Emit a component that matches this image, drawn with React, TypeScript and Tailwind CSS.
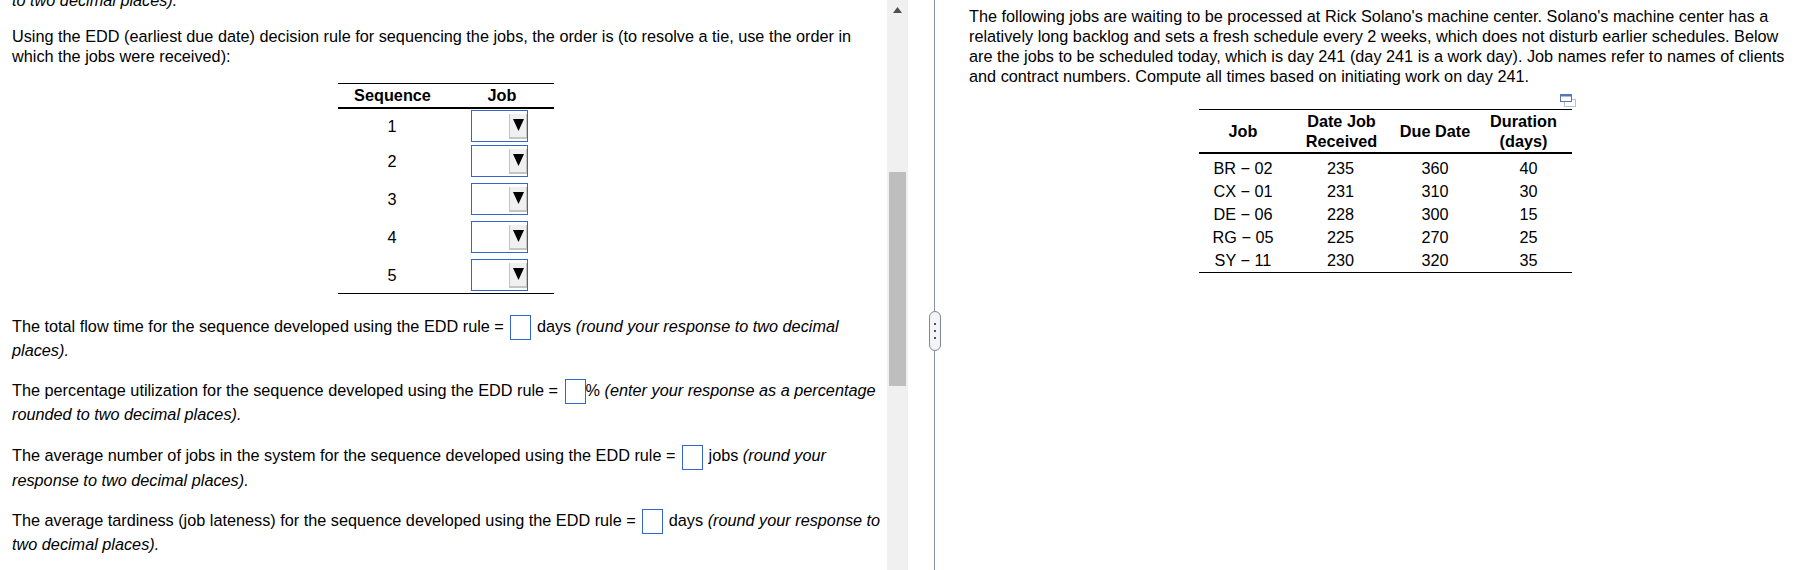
function Blank({ className }: { className: string }) {
  return <span className={`-my-[2px] ml-[2px] inline-block h-[25px] w-[21px] border-[1.3px] border-[#3366cc] bg-white align-middle ${className}`} />
}

function JobSelect() {
  return (
    <div className="relative h-[32px] w-[57px] border-[1.3px] border-[#3366cc] bg-white">
      <div className="absolute top-[3px] right-0 flex h-[25px] w-[18px] items-center justify-center border-r border-b-2 border-l border-[#c4c4c4] bg-[#f0f0f0]">
        <svg width="11" height="12" viewBox="0 0 11 12" className="-mt-[1px]">
          <polygon points="0,0 11,0 5.5,12" fill="#000" />
        </svg>
      </div>
    </div>
  )
}

const sequence = [
  { n: 1, cls: 'mt-[1px]' },
  { n: 2, cls: 'mt-[3px]' },
  { n: 3, cls: 'mt-[6px]' },
  { n: 4, cls: 'mt-[6px]' },
  { n: 5, cls: 'mt-[6px]' },
]

const jobs = [
  ['BR − 02', '235', '360', '40'],
  ['CX − 01', '231', '310', '30'],
  ['DE − 06', '228', '300', '15'],
  ['RG − 05', '225', '270', '25'],
  ['SY − 11', '230', '320', '35'],
]

function SequenceTable() {
  return (
    <div className="ml-[338px] mt-[17px] w-[216px] border-t border-b border-black pb-[2px]">
      <div className="flex h-[25px] items-center border-b-2 border-black pb-[2px] font-bold">
        <div className="w-[109px] text-center">Sequence</div>
        <div className="w-[107px] pl-[3px] text-center">Job</div>
      </div>
      {sequence.map((row) => (
        <div key={row.n} className={`flex h-[32px] items-center ${row.cls}`}>
          <div className="w-[107px] pl-[1px] text-center">{row.n}</div>
          <div className="pl-[26px]"><JobSelect /></div>
        </div>
      ))}
    </div>
  )
}

function JobsTable() {
  return (
    <div className="relative ml-[229px] mt-[23px] w-[373px] border-t border-b border-black">
      <svg width="16" height="13" viewBox="0 0 16 13" className="absolute -top-[16px] right-[-4px]">
        <rect x="4.5" y="5.5" width="11" height="7" fill="#fff" stroke="#b4c0d6" />
        <rect x="0.5" y="0.5" width="11" height="7" fill="#fff" stroke="#5577b8" />
        <rect x="0.5" y="0.5" width="11" height="2" fill="#5577b8" />
      </svg>
      <div className="flex h-[44px] items-center border-b-2 border-black text-center font-bold">
        <div className="w-[88px]">Job</div>
        <div className="w-[100px] pl-[9px]">Date Job<br />Received</div>
        <div className="w-[92px] pl-[4px]">Due Date</div>
        <div className="w-[93px] pr-[4px]">Duration<br />(days)</div>
      </div>
      <div className="pt-[2px] pb-[1px]">
        {jobs.map((row) => (
          <div key={row[0]} className="flex h-[23px] items-center text-center">
            <div className="w-[88px]">{row[0]}</div>
            <div className="w-[100px] pl-[7px]">{row[1]}</div>
            <div className="w-[92px] pl-[4px]">{row[2]}</div>
            <div className="w-[93px] pl-[6px]">{row[3]}</div>
          </div>
        ))}
      </div>
    </div>
  )
}

export default function App() {
  return (
    <div className="flex h-[570px] w-[1807px] overflow-hidden bg-white font-['Liberation_Sans',Arial,sans-serif] text-[16.25px] leading-[20px] text-black">
      {/* question, scrolled a little */}
      <div className="h-full w-[887px] overflow-hidden">
        <div className="-mt-[10px] w-[887px] pl-[12px]">
          <p className="italic">to two decimal places).</p>
          <p className="mt-[16px] w-[860px]">
            Using the EDD (earliest due date) decision rule for sequencing the jobs, the order is (to resolve a tie, use the order in which the jobs were received):
          </p>
          <div className="-ml-[12px]"><SequenceTable /></div>

          <p className="mt-[20px] w-[850px] leading-[24px]">
            The total flow time for the sequence developed using the EDD rule = <Blank className="mr-[1px]" /> days <i>(round your response to two decimal places).</i>
          </p>
          <p className="mt-[16px] w-[870px] leading-[24px]">
            The percentage utilization for the sequence developed using the EDD rule = <Blank className="" />% <i>(enter your response as a percentage rounded to two decimal places).</i>
          </p>
          <p className="mt-[17px] w-[850px] leading-[24px]">
            The average number of jobs in the system for the sequence developed using the EDD rule = <Blank className="mr-[1px]" /> jobs <i>(round your response to two decimal places).</i>
          </p>
          <p className="mt-[16px] w-[875px] leading-[24px]">
            The average tardiness (job lateness) for the sequence developed using the EDD rule = <Blank className="mr-[1px]" /> days <i>(round your response to two decimal places).</i>
          </p>
        </div>
      </div>

      {/* scrollbar */}
      <div className="relative h-full w-[21px] shrink-0 bg-[#f0f0f0]">
        <svg width="9" height="6" viewBox="0 0 9 6" className="absolute top-[7px] left-[6px]">
          <polygon points="4.5,0 9,6 0,6" fill="#505050" />
        </svg>
        <div className="absolute top-[172px] left-[2px] h-[214px] w-[17px] bg-[#bebebe]" />
      </div>

      {/* divider with drag handle */}
      <div className="relative ml-[26px] h-full w-[1px] shrink-0 bg-[#8a93a6]">
        <div className="absolute top-[311px] -left-[5px] flex h-[40px] w-[12px] flex-col items-center justify-center gap-[5px] rounded-[6px] border border-[#7f8798] bg-[#f3f4f6]">
          <span className="h-[2px] w-[2px] bg-[#5b4b6b]" />
          <span className="h-[2px] w-[2px] bg-[#5b4b6b]" />
          <span className="h-[2px] w-[2px] bg-[#5b4b6b]" />
        </div>
      </div>

      {/* job data */}
      <div className="ml-[34px] w-[838px] pt-[6px]">
        <p className="w-[830px]">
          The following jobs are waiting to be processed at Rick Solano's machine center. Solano's machine center has a relatively long backlog and sets a fresh schedule every 2 weeks, which does not disturb earlier schedules. Below are the jobs to be scheduled today, which is day 241 (day 241 is a work day). Job names refer to names of clients and contract numbers. Compute all times based on initiating work on day 241.
        </p>
        <div className="pl-[1px]"><JobsTable /></div>
      </div>
    </div>
  )
}
